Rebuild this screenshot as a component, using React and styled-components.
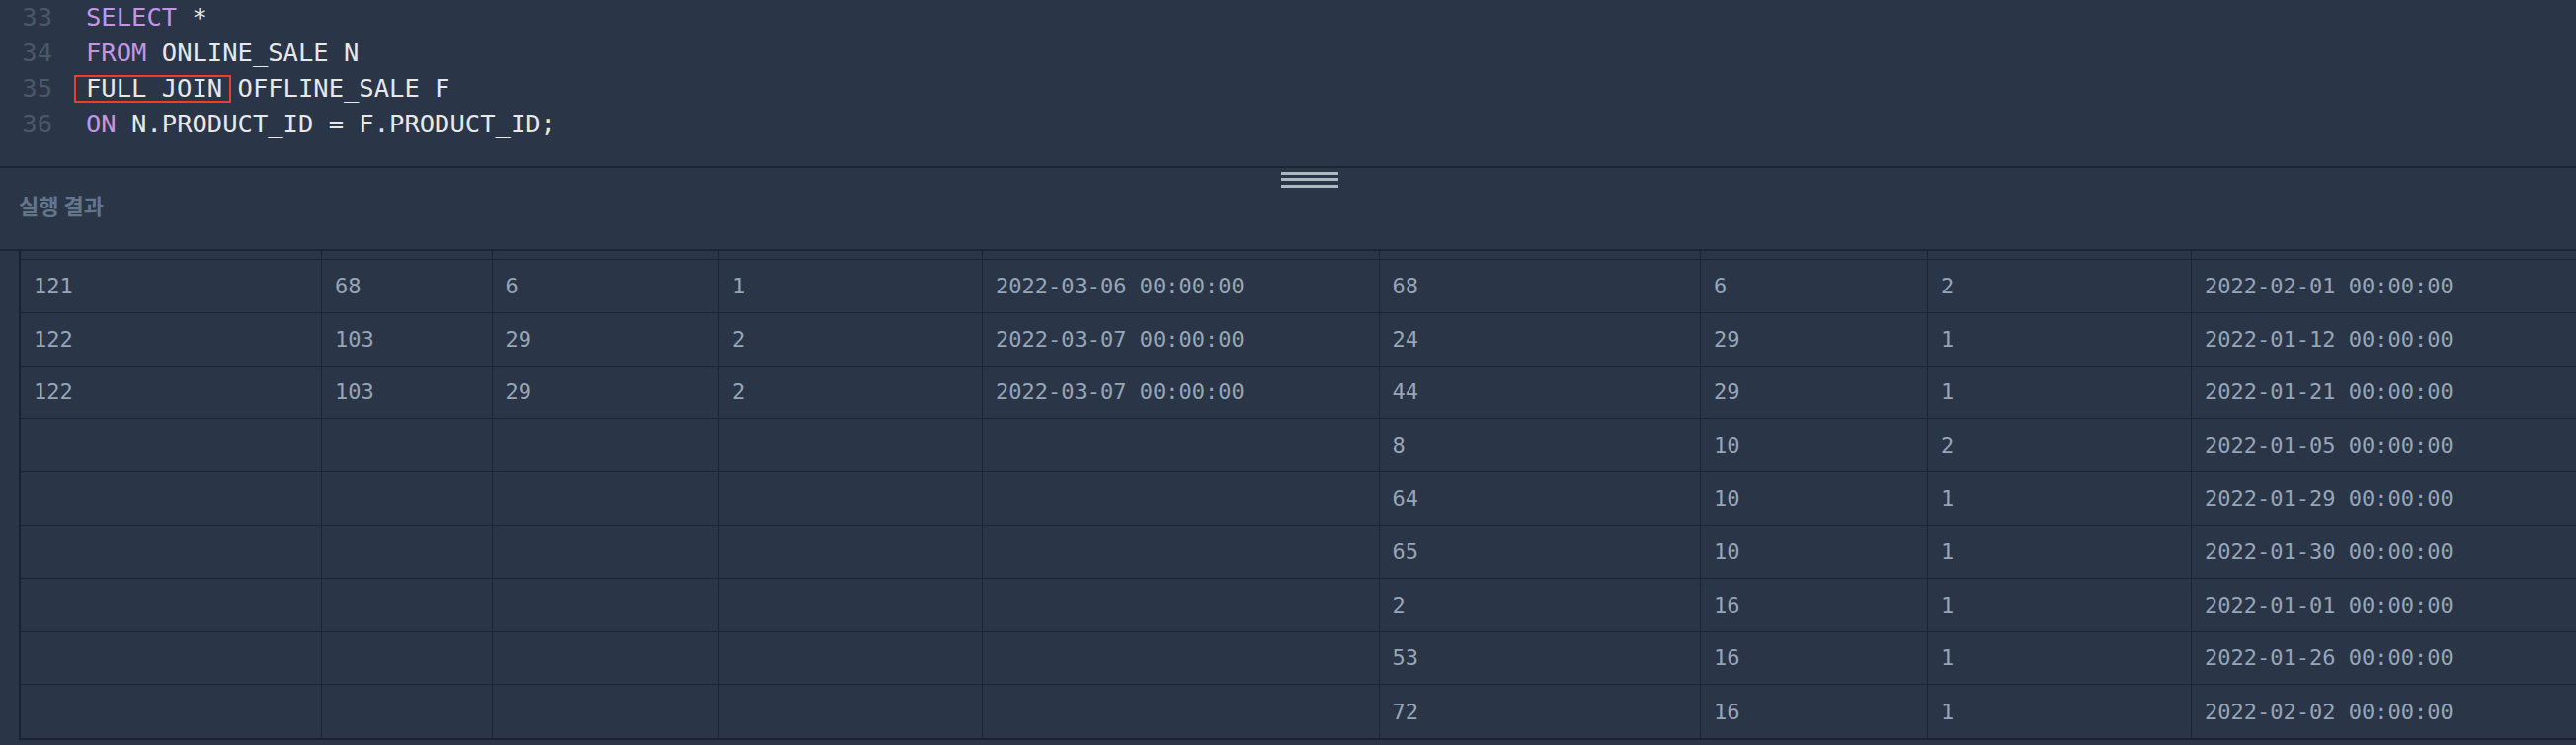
import React from 'react'
import styled, { createGlobalStyle } from 'styled-components'

const GlobalStyle = createGlobalStyle`
    html, body {
        margin: 0;
        padding: 0;
        background: #2a3547;
        overflow: hidden;
    }
`

const Page = styled.div`
    width: 2608px;
    height: 754px;
    background: #2a3547;
    overflow: hidden;
`

const Editor = styled.div`
    height: 168px;
    border-bottom: 2px solid #1c2533;
    overflow: hidden;
    font-family: "DejaVu Sans Mono", monospace;
    font-size: 25.5px;
`

const Lines = styled.div`
    margin-top: -1.5px;
`

const Line = styled.div`
    display: flex;
    height: 36px;
    line-height: 36px;
    white-space: pre;
`

const Gutter = styled.span`
    width: 53px;
    text-align: right;
    color: #4b586a;
    margin-right: 34px;
    flex-shrink: 0;
`

const Code = styled.span`
    color: #e6e8ea;
`

const Keyword = styled.span`
    color: #c396e3;
`

const Marked = styled.span`
    position: relative;

    &::after {
        content: '';
        position: absolute;
        top: 2px;
        bottom: 0;
        left: -12px;
        right: -9px;
        border: 2.5px solid #ec3f28;
    }
`

const HandleRow = styled.div`
    height: 24px;
    display: flex;
    justify-content: center;
    padding-left: 44px;
    padding-top: 4px;
    box-sizing: border-box;
`

const Handle = styled.div`
    width: 58px;
    display: flex;
    flex-direction: column;
    gap: 3.6px;

    span {
        display: block;
        height: 2.8px;
        background: #aeb8c1;
    }
`

const Title = styled.div`
    height: 58px;
    padding-left: 19px;
    font-family: "Noto Sans CJK KR", "Noto Sans", sans-serif;
    font-weight: 700;
    font-size: 22px;
    line-height: 26px;
    color: #63768a;
`

const Results = styled.div`
    border-top: 2px solid #1c2533;
    padding-left: 19px;
`

const Table = styled.div`
    border-left: 2px solid #1a2230;
    border-bottom: 2px solid #1a2230;
    width: max-content;
    font-family: "DejaVu Sans Mono", monospace;
    font-size: 22px;
    color: #97a5b6;
`

const cols = '305px 172.5px 229.5px 267px 401.5px 325.5px 230px 267px 500px'

const Row = styled.div`
    display: grid;
    grid-template-columns: ${cols};
    height: ${props => props.head ? '9px' : '53.8px'};
    box-sizing: border-box;
    border-bottom: 1px solid #1b2432;
    &:last-child {
        border-bottom: none;
    }
`

const Cell = styled.div`
    border-right: 1px solid #1b2432;
    padding-left: 13px;
    display: flex;
    align-items: center;
    white-space: pre;
    overflow: hidden;
`

const rows = [
    ['121', '68', '6', '1', '2022-03-06 00:00:00', '68', '6', '2', '2022-02-01 00:00:00'],
    ['122', '103', '29', '2', '2022-03-07 00:00:00', '24', '29', '1', '2022-01-12 00:00:00'],
    ['122', '103', '29', '2', '2022-03-07 00:00:00', '44', '29', '1', '2022-01-21 00:00:00'],
    ['', '', '', '', '', '8', '10', '2', '2022-01-05 00:00:00'],
    ['', '', '', '', '', '64', '10', '1', '2022-01-29 00:00:00'],
    ['', '', '', '', '', '65', '10', '1', '2022-01-30 00:00:00'],
    ['', '', '', '', '', '2', '16', '1', '2022-01-01 00:00:00'],
    ['', '', '', '', '', '53', '16', '1', '2022-01-26 00:00:00'],
    ['', '', '', '', '', '72', '16', '1', '2022-02-02 00:00:00'],
]

export default function App() {
    return (
        <Page>
            <GlobalStyle />
            <Editor>
                <Lines>
                    <Line><Gutter>33</Gutter><Code><Keyword>SELECT</Keyword> *</Code></Line>
                    <Line><Gutter>34</Gutter><Code><Keyword>FROM</Keyword> ONLINE_SALE N</Code></Line>
                    <Line><Gutter>35</Gutter><Code><Marked>FULL JOIN</Marked> OFFLINE_SALE F</Code></Line>
                    <Line><Gutter>36</Gutter><Code><Keyword>ON</Keyword> N.PRODUCT_ID = F.PRODUCT_ID;</Code></Line>
                </Lines>
            </Editor>
            <HandleRow>
                <Handle><span /><span /><span /></Handle>
            </HandleRow>
            <Title>실행 결과</Title>
            <Results>
                <Table>
                    <Row head>
                        {rows[0].map((_, i) => <Cell key={i} />)}
                    </Row>
                    {rows.map((r, i) => (
                        <Row key={i}>
                            {r.map((v, j) => <Cell key={j}>{v}</Cell>)}
                        </Row>
                    ))}
                </Table>
            </Results>
        </Page>
    )
}
